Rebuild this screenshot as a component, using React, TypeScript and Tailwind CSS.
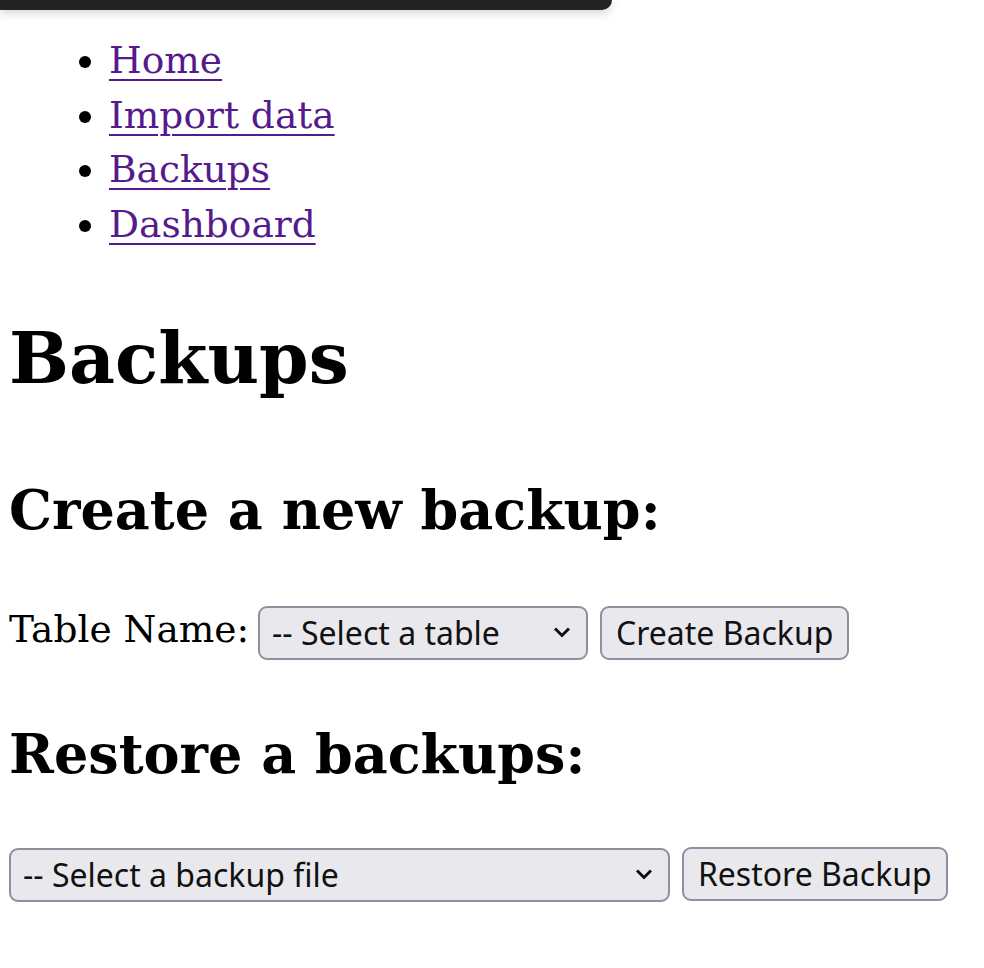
const links = ["Home", "Import data", "Backups", "Dashboard"];

function Chevron() {
  return (
    <svg width="18" height="11" viewBox="0 0 18 11" className="absolute right-[17px] top-1/2 -translate-y-1/2 pointer-events-none">
      <path d="M2 2 L9 9 L16 2" fill="none" stroke="#111" strokeWidth="3" />
    </svg>
  );
}

function FakeSelect({ label, width }: { label: string; width: string }) {
  return (
    <span className={`relative inline-block align-middle ${width}`}>
      <select className="w-full h-[54px] appearance-none rounded-[9px] border-[2.5px] border-[#8f8f9d] bg-[#e9e9ed] py-0 pl-[12px] pr-[50px] text-[32px] text-[#111] font-['Noto_Sans',sans-serif] leading-[1.3]">
        <option>{label}</option>
      </select>
      <Chevron />
    </span>
  );
}

function Btn({ children }: { children: string }) {
  return (
    <button className="inline-block align-middle h-[54px] rounded-[9px] border-[2.5px] border-[#8f8f9d] bg-[#e9e9ed] px-[14px] text-[32px] text-[#111] font-['Noto_Sans',sans-serif] leading-none">
      {children}
    </button>
  );
}

export default function App() {
  return (
    <div className="relative min-h-[968px] bg-white text-black font-['DejaVu_Serif',serif] text-[37.5px] leading-[54.5px] pl-[9px] pr-2 pt-[33px]">
      <div className="absolute top-0 left-0 h-[10px] w-[612px] rounded-br-[10px] bg-[#232323] shadow-[0_3px_10px_rgba(0,0,0,0.18)]" />

      <ul className="list-disc pl-[100px]">
        {links.map((l) => (
          <li key={l}>
            <a href="#" className="text-[#551a8b] underline decoration-[2px] underline-offset-[6px]">{l}</a>
          </li>
        ))}
      </ul>

      <h1 className="mt-[53px] text-[71px] leading-[109px] font-bold">Backups</h1>

      <h2 className="mt-[56px] text-[54px] leading-[82px] font-bold">Create a new backup:</h2>
      <div className="mt-[51px] whitespace-nowrap">
        Table Name: <FakeSelect label="-- Select a table" width="w-[330px] -ml-[3px]" /> <Btn>Create Backup</Btn>
      </div>

      <h2 className="mt-[53px] text-[54px] leading-[82px] font-bold">Restore a backups:</h2>
      <div className="mt-[49px] whitespace-nowrap">
        <FakeSelect label="-- Select a backup file" width="w-[661px]" /> <Btn>Restore Backup</Btn>
      </div>
    </div>
  );
}
